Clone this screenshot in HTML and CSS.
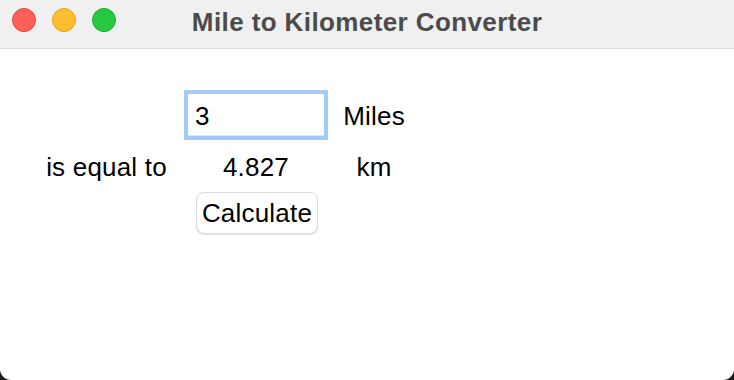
FILE: index.html
```html
<!DOCTYPE html>
<html>
<head>
<meta charset="utf-8">
<link rel="stylesheet" href="styles.css">
</head>
<body>
<div class="window">
  <div class="titlebar">
    <div class="lights">
      <span class="light red"></span>
      <span class="light yellow"></span>
      <span class="light green"></span>
    </div>
    <div class="title">Mile to Kilometer Converter</div>
  </div>
  <div class="content">
    <div class="grid">
      <div class="cell c1"><input class="entry" type="text" value="3"></div>
      <div class="cell c2 label">Miles</div>
      <div class="cell c0 label">is equal to</div>
      <div class="cell c1 label">4.827</div>
      <div class="cell c2 label">km</div>
      <div class="cell c1 r2"><button class="btn">Calculate</button></div>
    </div>
  </div>
</div>
</body>
</html>
```
FILE: styles.css
```css
html, body {
  margin: 0;
  padding: 0;
  background: #1c1c1c;
}
.window {
  width: 734px;
  height: 380px;
  background: #ffffff;
  border-radius: 0 0 11px 11px;
  overflow: hidden;
  font-family: "Liberation Sans", Arial, sans-serif;
  color: #000;
}
.titlebar {
  position: relative;
  height: 48px;
  background: #f0f0f0;
  border-bottom: 1px solid #d9d9d9;
  display: flex;
  align-items: center;
  justify-content: center;
}
.lights {
  position: absolute;
  left: 12px;
  top: 8px;
  display: flex;
  gap: 16px;
}
.light {
  width: 24px;
  height: 24px;
  border-radius: 50%;
  box-sizing: border-box;
}
.red { background: #fe5f57; border: 1px solid #e2463f; }
.yellow { background: #febc2e; border: 1px solid #e1a116; }
.green { background: #28c840; border: 1px solid #14ae2a; }
.title {
  font-weight: bold;
  font-size: 26px;
  color: #4b4b4b;
  letter-spacing: 0.4px;
  margin-top: -4px;
}
.content {
  padding-top: 41px;
  padding-left: 29px;
}
.grid {
  display: grid;
  grid-template-columns: 155px 144px 92px;
  grid-template-rows: 50px 52px 42px;
}
.cell {
  display: flex;
  align-items: center;
  justify-content: center;
}
.c0 { grid-column: 1; }
.c1 { grid-column: 2; }
.c2 { grid-column: 3; }
.r2 { grid-row: 3; }
.label {
  font-size: 26px;
  letter-spacing: 0.2px;
  padding-top: 2px;
}
.entry {
  width: 144px;
  height: 50px;
  box-sizing: border-box;
  border: 4px solid #a3cbf6;
  outline: none;
  padding: 2px 0 0 7px;
  margin: 0;
  font-family: "Liberation Sans", Arial, sans-serif;
  font-size: 26px;
  color: #000;
  background: #fff;
  box-shadow: inset 0 -1px 0 #e2e2e2;
}
.btn {
  width: 122px;
  height: 42px;
  box-sizing: border-box;
  margin-left: 2px;
  border: 1px solid #dcdcdc;
  border-radius: 8px;
  background: #fff;
  box-shadow: 0 1px 1px rgba(0,0,0,0.12);
  font-family: "Liberation Sans", Arial, sans-serif;
  font-size: 26px;
  letter-spacing: 0.2px;
  color: #000;
  padding: 0;
}
```
